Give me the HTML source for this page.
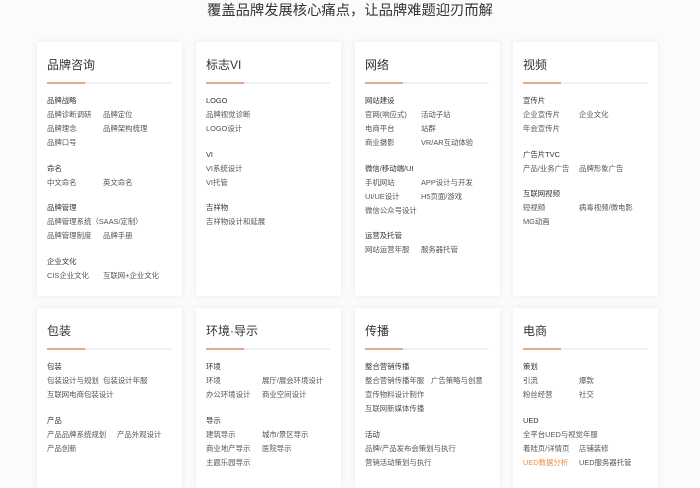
<!DOCTYPE html>
<html><head><meta charset="utf-8"><style>
*{margin:0;padding:0;box-sizing:border-box}
body{width:700px;height:470px;overflow:hidden;background:#fbfbfb;font-family:"Liberation Sans","Noto Sans CJK SC",sans-serif;position:relative}
h1{position:absolute;top:1px;left:0;width:700px;text-align:center;font-size:14.3px;font-weight:normal;color:#333;line-height:20px}
.card{position:absolute;width:145px;background:#fff;box-shadow:0 0 6px rgba(0,0,0,0.07);padding:0 10px}
.t{font-size:12px;color:#333;margin-top:16px;line-height:14px;height:14px}
.ln{margin-top:10px;height:2px;background:#f0f0f0;position:relative;margin-bottom:10px;width:124px}
.ln:before{content:"";position:absolute;left:0;top:0;width:38px;height:2px;background:#e4a88a}
.g{margin-bottom:11.5px}
.i{font-size:7.4px;color:#555;line-height:14px;white-space:nowrap}
.i span{display:inline-block;width:56px}
.h{color:#333}
.o{color:#f08a3c}
</style></head><body>
<h1>覆盖品牌发展核心痛点，让品牌难题迎刃而解</h1>

<div class="card" style="left:37px;top:42px;height:254px">
<div class="t">品牌咨询</div><div class="ln"></div>
<div class="g"><div class="i h">品牌战略</div><div class="i"><span>品牌诊断调研</span>品牌定位</div><div class="i"><span>品牌理念</span>品牌架构梳理</div><div class="i">品牌口号</div></div>
<div class="g"><div class="i h">命名</div><div class="i"><span>中文命名</span>英文命名</div></div>
<div class="g"><div class="i h">品牌管理</div><div class="i">品牌管理系统（SAAS/定制）</div><div class="i"><span>品牌管理制度</span>品牌手册</div></div>
<div class="g"><div class="i h">企业文化</div><div class="i"><span>CIS企业文化</span>互联网+企业文化</div></div>
</div>

<div class="card" style="left:196px;top:42px;height:254px">
<div class="t">标志VI</div><div class="ln"></div>
<div class="g"><div class="i h">LOGO</div><div class="i">品牌视觉诊断</div><div class="i">LOGO设计</div></div>
<div class="g"><div class="i h">VI</div><div class="i">VI系统设计</div><div class="i">VI托管</div></div>
<div class="g"><div class="i h">吉祥物</div><div class="i">吉祥物设计和延展</div></div>
</div>

<div class="card" style="left:355px;top:42px;height:254px">
<div class="t">网络</div><div class="ln"></div>
<div class="g"><div class="i h">网站建设</div><div class="i"><span>官网(响应式)</span>活动子站</div><div class="i"><span>电商平台</span>站群</div><div class="i"><span>商业摄影</span>VR/AR互动体验</div></div>
<div class="g"><div class="i h">微信/移动端/UI</div><div class="i"><span>手机网站</span>APP设计与开发</div><div class="i"><span>UI/UE设计</span>H5页面/游戏</div><div class="i">微信公众号设计</div></div>
<div class="g"><div class="i h">运营及托管</div><div class="i"><span>网站运营年服</span>服务器托管</div></div>
</div>

<div class="card" style="left:513px;top:42px;height:254px">
<div class="t">视频</div><div class="ln"></div>
<div class="g"><div class="i h">宣传片</div><div class="i"><span>企业宣传片</span>企业文化</div><div class="i">年会宣传片</div></div>
<div class="g"><div class="i h">广告片TVC</div><div class="i"><span>产品/业务广告</span>品牌形象广告</div></div>
<div class="g"><div class="i h">互联网视频</div><div class="i"><span>短视频</span>病毒视频/微电影</div><div class="i">MG动画</div></div>
</div>

<div class="card" style="left:37px;top:308px;height:180px">
<div class="t">包装</div><div class="ln"></div>
<div class="g"><div class="i h">包装</div><div class="i"><span>包装设计与规划</span>包装设计年服</div><div class="i">互联网电商包装设计</div></div>
<div class="g"><div class="i h">产品</div><div class="i"><span style="width:70px">产品品牌系统规划</span>产品外观设计</div><div class="i">产品创新</div></div>
</div>

<div class="card" style="left:196px;top:308px;height:180px">
<div class="t">环境·导示</div><div class="ln"></div>
<div class="g"><div class="i h">环境</div><div class="i"><span>环境</span>展厅/展会环境设计</div><div class="i"><span>办公环境设计</span>商业空间设计</div></div>
<div class="g"><div class="i h">导示</div><div class="i"><span>建筑导示</span>城市/景区导示</div><div class="i"><span>商业地产导示</span>医院导示</div><div class="i">主题乐园导示</div></div>
</div>

<div class="card" style="left:355px;top:308px;height:180px">
<div class="t">传播</div><div class="ln"></div>
<div class="g"><div class="i h">整合营销传播</div><div class="i"><span style="width:66px">整合营销传播年服</span>广告策略与创意</div><div class="i">宣传物料设计制作</div><div class="i">互联网新媒体传播</div></div>
<div class="g"><div class="i h">活动</div><div class="i">品牌/产品发布会策划与执行</div><div class="i">营销活动策划与执行</div></div>
</div>

<div class="card" style="left:513px;top:308px;height:180px">
<div class="t">电商</div><div class="ln"></div>
<div class="g"><div class="i h">策划</div><div class="i"><span>引流</span>爆款</div><div class="i"><span>粉丝经营</span>社交</div></div>
<div class="g"><div class="i h">UED</div><div class="i">全平台UED与视觉年服</div><div class="i"><span>着陆页/详情页</span>店铺装修</div><div class="i"><span class="o">UED数据分析</span>UED服务器托管</div></div>
</div>
</body></html>
